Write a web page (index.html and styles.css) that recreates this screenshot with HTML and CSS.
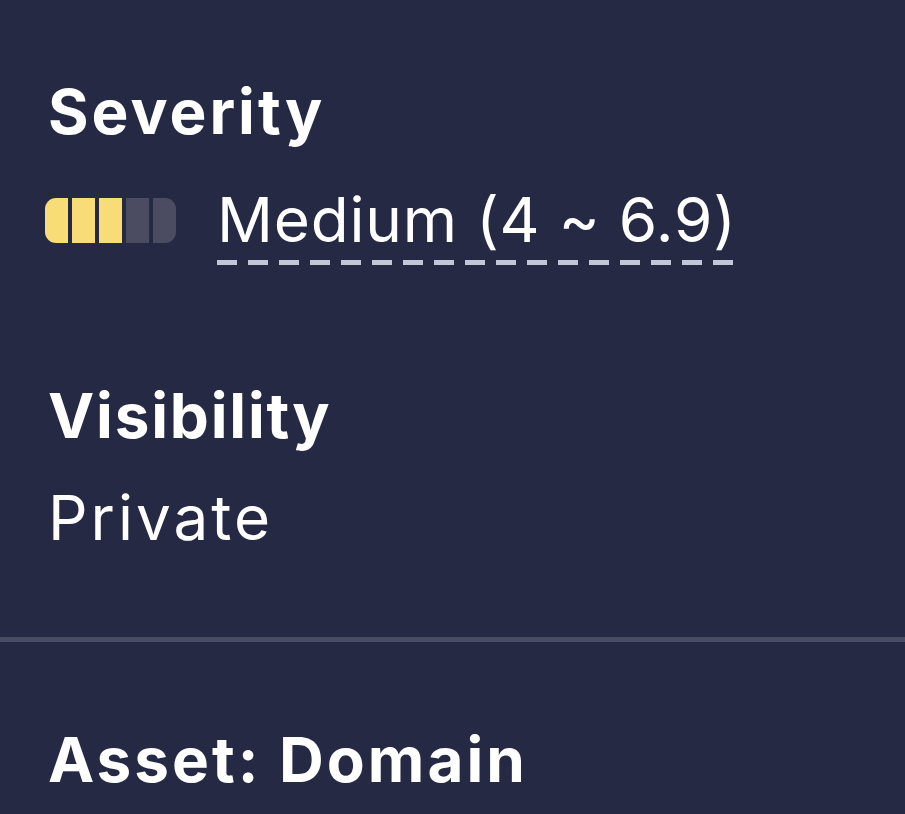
FILE: index.html
```html
<!DOCTYPE html>
<html>
<head>
<meta charset="utf-8">
<link rel="stylesheet" href="styles.css">
</head>
<body>
<div class="panel">
  <section class="field field-severity">
    <h2 class="label">Severity</h2>
    <div class="value-row">
      <span class="sev-bar" aria-hidden="true">
        <span class="seg seg-on seg-first"></span>
        <span class="seg seg-on"></span>
        <span class="seg seg-on"></span>
        <span class="seg seg-off"></span>
        <span class="seg seg-off seg-last"></span>
      </span>
      <span class="value dashed">Medium (4 ~ 6.9)</span>
    </div>
  </section>
  <section class="field field-visibility">
    <h2 class="label label-tight">Visibility</h2>
    <div class="value value-wide">Private</div>
  </section>
  <div class="divider"></div>
  <section class="field field-asset">
    <h2 class="label">Asset: Domain</h2>
  </section>
</div>
</body>
</html>
```
FILE: styles.css
```css
html, body {
  margin: 0;
  padding: 0;
  background: #252944;
}
body {
  font-family: Inter, "Noto Sans", sans-serif;
  color: #ffffff;
  width: 905px;
  height: 814px;
  overflow: hidden;
}
.panel {
  padding-top: 75px;
}
.field {
  padding: 0 48px;
}
.label {
  margin: 0;
  font-size: 62px;
  line-height: 74px;
  font-weight: 700;
  letter-spacing: 3px;
}
.label-tight {
  letter-spacing: 1.8px;
}
.value {
  font-size: 62px;
  line-height: 74px;
  font-weight: 400;
  letter-spacing: 0.8px;
}
.value-wide {
  letter-spacing: 3px;
}
.value-row {
  display: flex;
  align-items: flex-start;
  margin-top: 34px;
}
.sev-bar {
  display: flex;
  gap: 4px;
  margin-top: 15px;
  margin-left: -3px;
  margin-right: 41px;
}
.seg {
  width: 23px;
  height: 45px;
}
.seg-on { background: #f8dc75; }
.seg-off { background: #4b4c62; }
.seg-first { border-radius: 11px 0 0 11px; }
.seg-last { border-radius: 0 11px 11px 0; }
.dashed {
  padding-bottom: 8px;
  background-image: linear-gradient(to right, #c3c6d6 0 20px, transparent 20px 31px);
  background-size: 31px 5px;
  background-repeat: repeat-x;
  background-position: left bottom;
}
.field-visibility {
  margin-top: 114px;
}
.field-visibility .value {
  margin-top: 28px;
}
.divider {
  height: 5px;
  background: #4a4c66;
  margin-top: 82px;
}
.field-asset {
  margin-top: 81px;
}
```
